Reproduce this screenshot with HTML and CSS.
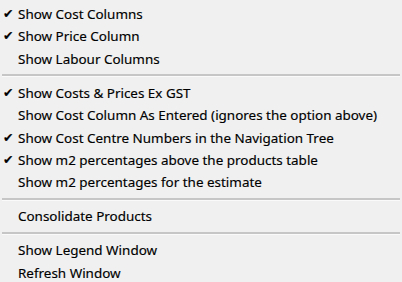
FILE: index.html
```html
<!DOCTYPE html>
<html lang="en">
<head>
  <meta charset="UTF-8">
  <title>View Options</title>
  <link rel="stylesheet" href="styles.css">
</head>
<body>
<div class="menu">
  <div class="item checked">Show Cost Columns</div>
  <div class="item checked">Show Price Column</div>
  <div class="item">Show Labour Columns</div>
  <div class="sep"></div>
  <div class="item checked">Show Costs &amp; Prices Ex GST</div>
  <div class="item">Show Cost Column As Entered (ignores the option above)</div>
  <div class="item checked">Show Cost Centre Numbers in the Navigation Tree</div>
  <div class="item checked">Show m2 percentages above the products table</div>
  <div class="item">Show m2 percentages for the estimate</div>
  <div class="sep"></div>
  <div class="item">Consolidate Products</div>
  <div class="sep"></div>
  <div class="item">Show Legend Window</div>
  <div class="item">Refresh Window</div>
</div>
</body>
</html>
```

FILE: styles.css
```css
body {
  margin: 0;
  background: #f0f0f0;
  font-family: 'Noto Sans', 'Open Sans', sans-serif;
  color: #000;
}
.menu {
  display: flex;
  flex-direction: column;
  padding: 3px 2px 0 2px;
}
.item {
  position: relative;
  height: 22.4px;
  line-height: 22.4px;
  padding-left: 16px;
  font-size: 13.45px;
  white-space: nowrap;
  -webkit-text-stroke: 0.15px #000;
}
.item.checked::before {
  content: "\2714";
  position: absolute;
  left: 1px;
  top: 0;
  font-family: 'DejaVu Sans', sans-serif;
  font-size: 12.5px;
  color: #000;
}
.sep {
  height: 11.6px;
  display: flex;
  align-items: center;
}
.sep::after {
  content: "";
  flex: 1;
  height: 2px;
  background: #c6c6c6;
  border-bottom: 1px solid #fafafa;
}
```
